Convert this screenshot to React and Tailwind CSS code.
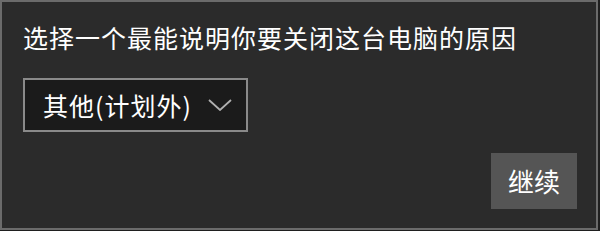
export default function App() {
  const font = { fontFamily: '"Noto Sans CJK SC", "Microsoft YaHei", sans-serif' };
  return (
    <div className="w-[600px] h-[231px] bg-[#1f1f1f]" style={font}>
      <div className="w-[598px] h-[230px] border-2 border-[#6b6b6b] bg-[#2b2b2b] flex flex-col pl-[21px] pr-[19px] pt-[19px]">
        <div className="text-[25px] leading-[32px] text-white tracking-[1px]">选择一个最能说明你要关闭这台电脑的原因</div>
        <div className="mt-[25px] w-[225px] h-[54px] border-2 border-[#8a8a8a] bg-[#1b1b1b] flex items-center pl-[18px] pr-[14px] text-white">
          <span className="text-[25px] leading-none tracking-[1px]">其他(计划外)</span>
          <svg className="ml-auto" width="24" height="12" viewBox="0 0 24 12" fill="none">
            <path d="M1 1 L12 11 L23 1" stroke="#b0b0b0" strokeWidth="1.8" />
          </svg>
        </div>
        <div className="flex justify-end mt-[21px]">
          <button className="w-[86px] h-[56px] bg-[#555555] text-white text-[26px] leading-none">继续</button>
        </div>
      </div>
    </div>
  );
}
